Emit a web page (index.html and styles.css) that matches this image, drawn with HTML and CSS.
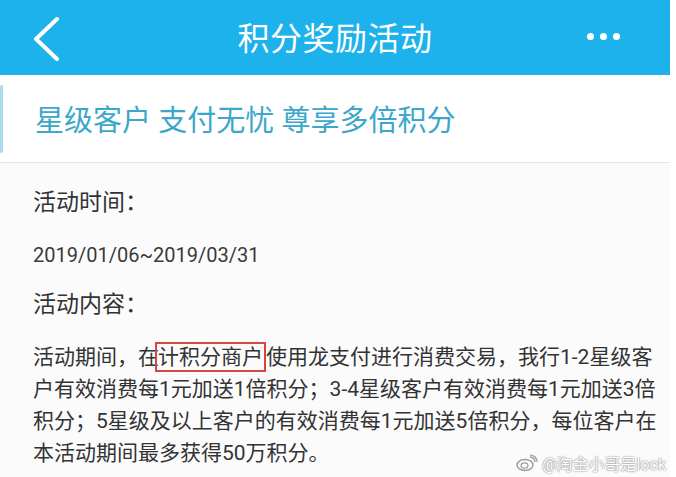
FILE: index.html
```html
<!DOCTYPE html>
<html lang="zh-CN">
<head>
    <meta charset="UTF-8">
    <meta name="viewport" content="width=device-width, initial-scale=1.0">
    <title>积分奖励活动</title>
    <link rel="stylesheet" href="styles.css">
</head>
<body>
    <div class="page">
        <!-- Header -->
        <header class="topbar">
            <div class="topbar-left">
                <svg class="back-icon" width="30" height="46" viewBox="0 0 30 46">
                    <path d="M25 4 L4 24 L25 44" fill="none" stroke="#fff" stroke-width="4" stroke-linecap="round" stroke-linejoin="round"/>
                </svg>
            </div>
            <h1 class="topbar-title">积分奖励活动</h1>
            <div class="topbar-right">
                <span class="dot"></span>
                <span class="dot"></span>
                <span class="dot"></span>
            </div>
        </header>

        <!-- Banner -->
        <section class="banner">
            <span class="banner-mark"></span>
            <h2 class="banner-text">星级客户 支付无忧 尊享多倍积分</h2>
        </section>

        <!-- Details -->
        <section class="details">
            <h3 class="details-label">活动时间：</h3>
            <p class="details-date">2019/01/06~2019/03/31</p>
            <h3 class="details-label second">活动内容：</h3>
            <p class="details-text">
                活动期间，在<span class="mark">计积分商户</span>使用龙支付进行消费交易，我行1-2星级客<br>
                户有效消费每1元加送1倍积分；3-4星级客户有效消费每1元加送3倍<br>
                积分；5星级及以上客户的有效消费每1元加送5倍积分，每位客户在<br>
                本活动期间最多获得50万积分。
            </p>

            <div class="watermark">
                <svg width="22" height="18" viewBox="0 0 22 18">
                    <ellipse cx="9" cy="11" rx="8" ry="5.5" fill="none" stroke="#9a9a9a" stroke-width="1.4"/>
                    <ellipse cx="8.5" cy="11.5" rx="3.4" ry="2.6" fill="none" stroke="#9a9a9a" stroke-width="1.2"/>
                    <path d="M14 3 A5 5 0 0 1 19 8" fill="none" stroke="#9a9a9a" stroke-width="1.3"/>
                    <path d="M14 0.8 A7.5 7.5 0 0 1 21.2 8" fill="none" stroke="#9a9a9a" stroke-width="1.3"/>
                </svg>
                <span>@淘金小哥是lock</span>
            </div>
        </section>
    </div>
</body>
</html>
```

FILE: styles.css
```css
/* General Styles */
body {
    margin: 0;
    padding: 0;
    background-color: #fff;
    font-family: Roboto, "Noto Sans CJK SC", sans-serif;
}

.page {
    width: 670px;
    height: 477px;
    overflow: hidden;
    background-color: #fbfbfc;
}

/* Header */
.topbar {
    height: 75px;
    background-color: #1db2ec;
    display: grid;
    grid-template-columns: 1fr auto 1fr;
    align-items: center;
    padding: 0 50px;
}

.topbar-left {
    display: flex;
    align-items: center;
    margin-left: -18px;
}

.back-icon {
    display: block;
    margin-top: 1px;
}

.topbar-title {
    margin: -3px 0 0;
    color: #fff;
    font-size: 32px;
    font-weight: 400;
    letter-spacing: 0.5px;
}

.topbar-right {
    display: flex;
    justify-content: flex-end;
    gap: 6px;
    margin-top: -3px;
}

.dot {
    width: 7px;
    height: 7px;
    border-radius: 50%;
    background-color: #fff;
}

/* Banner */
.banner {
    height: 87px;
    background-color: #fff;
    border-bottom: 1px solid #e4e6e8;
    display: flex;
    align-items: center;
}

.banner-mark {
    width: 3px;
    height: 68px;
    border-radius: 2px;
    background-color: #a9dcef;
}

.banner-text {
    margin: 0 0 2px 32px;
    color: #3aa7cb;
    font-size: 29px;
    font-weight: 400;
}

/* Details */
.details {
    position: relative;
    padding: 24px 0 0 33px;
    color: #333;
}

.details-label {
    margin: 0;
    font-size: 23px;
    font-weight: 400;
    line-height: 32px;
}

.details-label.second {
    margin-top: 18px;
}

.details-date {
    margin: 20px 0 0;
    font-size: 20px;
    line-height: 32px;
    color: #3a3a3a;
}

.details-text {
    margin: 20px 0 0;
    font-size: 21px;
    line-height: 32px;
    white-space: nowrap;
}

.mark {
    border: 2px solid #d4463f;
    padding: 1px 1px;
    margin-left: -4px;
}

.watermark {
    position: absolute;
    right: 4px;
    bottom: -6px;
    display: flex;
    align-items: center;
    gap: 4px;
    font-size: 16px;
    color: #fff;
    text-shadow: 0 0 2px #888, 0 0 1px #888;
}
```
